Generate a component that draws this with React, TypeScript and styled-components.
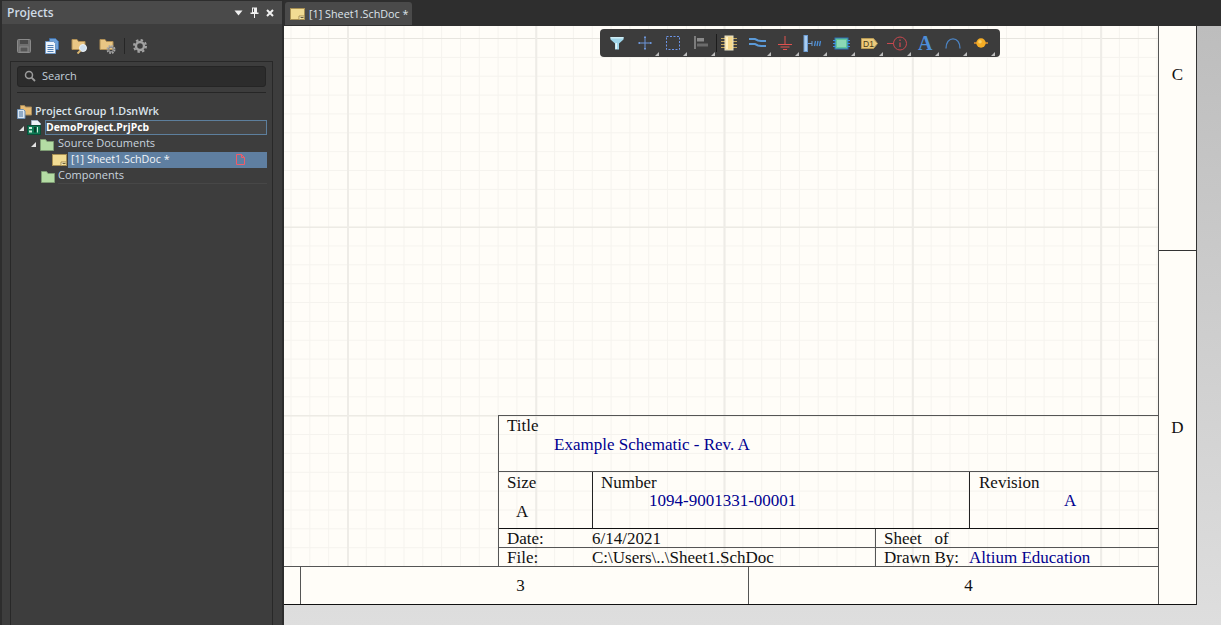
import React from "react";
import styled, { createGlobalStyle } from "styled-components";

const Global = createGlobalStyle`
  html, body { margin: 0; padding: 0; width: 1221px; height: 625px; overflow: hidden; background: #2e2e2e; }
  #root { width: 1221px; height: 625px; }
  * { box-sizing: border-box; }
`;

const UI = `"Open Sans", "Noto Sans", "Liberation Sans", sans-serif`;
const SERIF = `"Liberation Serif", "Times New Roman", serif`;

const Shell = styled.div`
  display: flex;
  width: 1221px;
  height: 625px;
  font-family: ${UI};
`;

/* ---------- left panel ---------- */
const Panel = styled.aside`
  width: 284px;
  flex: none;
  display: flex;
  flex-direction: column;
  background: #2d2d2d;
  padding: 1px 2px 0;
`;
const PanelHeader = styled.header`
  height: 23px;
  flex: none;
  display: flex;
  align-items: center;
  background: #4a4a4a;
  padding-left: 5px;
`;
const PanelTitle = styled.h1`
  flex: 1;
  margin: 0;
  font-size: 12px;
  font-weight: 600;
  color: #cfdbe6;
`;
const HeaderButton = styled.span`
  width: 16px;
  height: 16px;
  display: flex;
  align-items: center;
  justify-content: center;
`;
const HeaderButtons = styled.div`
  display: flex;
  padding-right: 4px;
`;
const PanelBody = styled.div`
  flex: 1;
  display: flex;
  flex-direction: column;
  background: #3d3d3d;
`;
const PanelToolbar = styled.div`
  height: 37px;
  flex: none;
  display: flex;
  align-items: center;
  padding: 7px 0 0 8px;
`;
const ToolSlot = styled.span`
  width: 28px;
  height: 20px;
  display: flex;
  align-items: center;
  justify-content: center;
`;
const ToolDivider = styled.span`
  width: 1px;
  height: 16px;
  margin: 0 1px 0 2px;
  background: #262626;
`;
const PanelInner = styled.div`
  flex: 1;
  margin: 0 9px 0 8px;
  padding: 4px 6px 0;
  border: solid #282828;
  border-width: 1px 1px 0;
`;
const SearchBox = styled.div`
  height: 21px;
  display: flex;
  align-items: center;
  gap: 6px;
  padding: 0 0 2px 6px;
  background: #2c2c2c;
  border: 1px solid #252525;
  border-radius: 3px;
  font-size: 11px;
  color: #c3d0dc;
`;
const Rule = styled.hr`
  margin: 5px 0 11px;
  border: 0;
  height: 1px;
  background: #262626;
`;
const Tree = styled.ul`
  list-style: none;
  margin: 0 -1px 0 -6px;
  padding: 0;
`;
const TreeRow = styled.li<{ $indent: number; $gap: number }>`
  height: 16px;
  display: flex;
  align-items: center;
  gap: ${(p) => p.$gap}px;
  padding-left: ${(p) => p.$indent}px;
`;
const Expander = styled.span`
  width: 0;
  height: 0;
  flex: none;
  border-style: solid;
  border-width: 0 0 5px 5px;
  border-color: transparent transparent #e2e2e2 transparent;
`;
const TreeLabel = styled.span<{ $strong?: boolean }>`
  font-size: ${(p) => (p.$strong ? 10.7 : 11)}px;
  line-height: 14px;
  padding-bottom: 2px;
  white-space: nowrap;
  font-weight: ${(p) => (p.$strong ? 600 : 400)};
  color: ${(p) => (p.$strong ? "#dbe3ea" : "#c8d3dd")};
`;
const ActiveLabel = styled(TreeLabel)`
  flex: 1;
  align-self: flex-start;
  height: 15px;
  padding: 0;
  font-size: 10.4px;
  line-height: 13px;
  border: 1px solid #5d7f9d;
  background: #464646;
  color: #fff;
  font-weight: 700;
`;
const SelectedLabel = styled(TreeLabel)`
  flex: 1;
  height: 16px;
  display: flex;
  align-items: center;
  justify-content: space-between;
  padding: 0 22px 2px 3px;
  font-size: 10.7px;
  background: #5f7fa1;
  color: #f2f5f8;
`;
const UnderlinedLabel = styled(TreeLabel)`
  flex: 1;
  align-self: stretch;
  padding: 0;
  border-bottom: 1px solid #474747;
`;

/* ---------- document area ---------- */
const Workspace = styled.main`
  flex: 1;
  min-width: 0;
  display: flex;
  flex-direction: column;
  position: relative;
`;
const TabBar = styled.nav`
  height: 26px;
  flex: none;
  display: flex;
  align-items: flex-end;
  padding: 0 0 1px 1px;
  background: #2e2e2e;
`;
const Tab = styled.div`
  width: 127px;
  height: 23px;
  display: flex;
  align-items: center;
  gap: 4px;
  padding-left: 5px;
  background: #4a4a4a;
  border-radius: 3px 3px 0 0;
  font-size: 10.8px;
  color: #dfe5ea;
  white-space: nowrap;
`;
const Canvas = styled.div`
  flex: 1;
  display: flex;
  background: linear-gradient(#bdbdbd, #dedede);
  padding-bottom: 20px;
`;
const Sheet = styled.section`
  width: 913px;
  display: grid;
  grid-template-columns: 874px 1fr;
  grid-template-rows: 1fr 37px;
  background: #fffdf8;
  border-right: 1px solid #333;
  border-bottom: 1px solid #111;
  font-family: ${SERIF};
  font-size: 17px;
  color: #111;
`;
const DrawingArea = styled.div`
  display: flex;
  align-items: flex-end;
  justify-content: flex-end;
  border-bottom: 1px solid #555;
  background-image:
    linear-gradient(to right, #eeece7 2px, transparent 2px),
    linear-gradient(to bottom, #e7e5df 1px, transparent 1px),
    linear-gradient(to right, #f5f3ee 1px, transparent 1px),
    linear-gradient(to bottom, #f5f3ee 1px, transparent 1px);
  background-size: 188.3px 100%, 100% 188.7px, 18.83px 100%, 100% 18.87px;
  background-position: 63px 0, 0 12px, 6.5px 0, 0 12px;
`;
const RowZones = styled.div`
  grid-row: 1 / 3;
  grid-column: 2;
  display: flex;
  flex-direction: column;
  border-left: 1px solid #555;
`;
const RowZone = styled.div<{ $h?: number; $top: number }>`
  height: ${(p) => (p.$h ? `${p.$h}px` : "auto")};
  flex: ${(p) => (p.$h ? "none" : 1)};
  padding-top: ${(p) => p.$top}px;
  text-align: center;
  line-height: 18px;
  & + & { border-top: 1px solid #333; }
`;
const ColZones = styled.div`
  display: flex;
`;
const ColZone = styled.div<{ $w: number; $shift?: number }>`
  width: ${(p) => p.$w}px;
  flex: none;
  display: flex;
  align-items: center;
  justify-content: center;
  padding-left: ${(p) => Math.max(p.$shift ?? 0, 0)}px;
  padding-right: ${(p) => Math.max(-(p.$shift ?? 0), 0)}px;
  border-left: 1px solid #555;
  &:first-child { border-left: 0; }
`;

const TitleBlock = styled.div`
  width: 660px;
  height: 151px;
  display: grid;
  grid-template-columns: 94px 377px 1fr;
  grid-template-rows: 56px 57px 19px 18px;
  border: solid #555;
  border-width: 1px 0 0 1px;
  line-height: 18px;
`;
const Cell = styled.div<{ $span?: number; $line?: string; $right?: boolean; $top?: number; $pad?: number }>`
  grid-column: span ${(p) => p.$span ?? 1};
  padding: ${(p) => p.$top ?? 0}px 0 0 ${(p) => p.$pad ?? 8}px;
  border-bottom: 1px solid ${(p) => p.$line ?? "#555"};
  border-right: ${(p) => (p.$right ? "1px solid #222" : "none")};
  white-space: nowrap;
`;
const InfoStrip = styled.div<{ $line?: string }>`
  grid-column: 1 / 4;
  display: grid;
  grid-template-columns: 376px 1fr;
  border-bottom: 1px solid ${(p) => p.$line ?? "#555"};
`;
const InfoCell = styled.div`
  display: flex;
  padding: 1px 0 0 8px;
  white-space: nowrap;
  & + & { border-left: 1px solid #555; }
`;
const FieldName = styled.span<{ $w: number }>`
  width: ${(p) => p.$w}px;
  flex: none;
`;
const Value = styled.div<{ $left: number; $top?: number; $plain?: boolean }>`
  padding-left: ${(p) => p.$left}px;
  margin-top: ${(p) => p.$top ?? 0}px;
  color: ${(p) => (p.$plain ? "#111" : "#000090")};
`;
const InlineValue = styled.span`
  color: #000090;
`;

/* ---------- floating wiring toolbar ---------- */
const FloatBar = styled.div`
  position: absolute;
  left: 316px;
  top: 29px;
  width: 400px;
  height: 28px;
  display: flex;
  padding-left: 3px;
  background: #3c3c3c;
  border-radius: 4px;
`;
const FloatButton = styled.span<{ $more?: boolean }>`
  position: relative;
  width: 28px;
  height: 28px;
  flex: none;
  display: flex;
  align-items: center;
  justify-content: center;
  &::after {
    content: "";
    display: ${(p) => (p.$more ? "block" : "none")};
    position: absolute;
    right: 0;
    bottom: 1px;
    border-style: solid;
    border-width: 0 0 4px 4px;
    border-color: transparent transparent #bdbdbd transparent;
  }
`;
const FloatDivider = styled.span`
  position: absolute;
  left: 116px;
  top: 5px;
  width: 1px;
  height: 18px;
  background: #1c1c1c;
`;

/* ---------- icons ---------- */
const Svg: React.FC<{ w?: number; h?: number; children: React.ReactNode }> = ({ w = 16, h = 16, children }) => (
  <svg width={w} height={h} viewBox={`0 0 ${w} ${h}`} fill="none" style={{ flex: "none", display: "block" }}>
    {children}
  </svg>
);

const SaveIcon = () => (
  <Svg><rect x="1.5" y="1.5" width="13" height="13" rx="1" fill="#6f6f6f" stroke="#8a8a8a" /><rect x="4" y="2" width="8" height="4" fill="#4a4a4a" /><rect x="4" y="9" width="8" height="5" fill="#565656" stroke="#8a8a8a" /></Svg>
);
const CopyIcon = () => (
  <Svg>
    <path d="M5.5 0.5h6l3 3v8h-9z" fill="#6da0d8" stroke="#3f6ea6" />
    <path d="M1.5 3.500h8l2 2v10h-10z" fill="#eef4fb" stroke="#6d97c6" />
    <path d="M3.500 7.500h6M3.500 9.500h6M3.500 11.500h6M3.500 13.500h6" stroke="#4f7fb5" />
  </Svg>
);
const FolderSearchIcon = () => (
  <Svg w={18} h={16}>
    <path d="M1 1.5h5l1.5 2H14v8H1z" fill="#e9c684" stroke="#b08f55" />
    <circle cx="12" cy="10" r="3.5" fill="#cfe0ee" stroke="#eef3f7" />
    <path d="M9.5 12.5L6.5 15.5" stroke="#d9b56f" strokeWidth="2" />
  </Svg>
);
const FolderGearIcon = () => (
  <Svg w={18} h={17}>
    <path d="M1 1.5h5l1.5 2H14v8H1z" fill="#e9c684" stroke="#b08f55" />
    <circle cx="12" cy="11.5" r="3.2" fill="none" stroke="#a9a9a9" strokeWidth="2.6" strokeDasharray="1.6 0.9" />
    <circle cx="12" cy="11.5" r="2.4" fill="none" stroke="#8c8c8c" strokeWidth="1.2" />
  </Svg>
);
const GearIcon = () => (
  <Svg>
    <circle cx="8" cy="8" r="6" stroke="#a2a2a2" strokeWidth="2" strokeDasharray="2.4 2.3" />
    <circle cx="8" cy="8" r="4" stroke="#a0a0a0" strokeWidth="2.4" />
  </Svg>
);
const SearchIcon = () => (
  <Svg w={12} h={12}>
    <circle cx="5" cy="5" r="3.5" stroke="#9c9c9c" strokeWidth="1.5" />
    <path d="M7.6 7.6L11 11" stroke="#9c9c9c" strokeWidth="1.8" />
  </Svg>
);
const DropIcon = () => (
  <Svg w={9} h={6}><path d="M0.5 0.5h8L4.5 5.5z" fill="#f0f0f0" /></Svg>
);
const PinIcon = () => (
  <Svg w={9} h={11}>
    <path d="M2 0.5h5v5h1.5v1.5h-8V5.5H2z" fill="#f0f0f0" />
    <path d="M4.5 7v4" stroke="#f0f0f0" />
    <path d="M3.5 1.5v3.5" stroke="#4a4a4a" />
  </Svg>
);
const CloseIcon = () => (
  <Svg w={8} h={8}><path d="M1 1l6 6M7 1L1 7" stroke="#f0f0f0" strokeWidth="2" /></Svg>
);
const GroupIcon = () => (
  <Svg>
    <path d="M3.5 1.5h4l1 1.500h6v8h-11z" fill="#e6bb74" stroke="#a98b5a" />
    <path d="M0.5 5.500h6l1.500 1.500v7.500h-7.500z" fill="#dbe6f2" stroke="#6f90b4" />
    <path d="M2 8h4M2 10h4M2 12h4" stroke="#47709d" />
  </Svg>
);
const PcbProjectIcon = () => (
  <Svg w={15} h={16}>
    <path d="M4.5 0.5h6l3 3v8h-9z" fill="#eef2f7" stroke="#9fb0c2" />
    <rect x="0.5" y="5.500" width="13" height="9" fill="#0f7a55" stroke="#0b4d37" />
    <rect x="2" y="7" width="3" height="2" fill="#cfeede" />
    <rect x="2" y="10.5" width="3" height="2" fill="#cfeede" />
    <rect x="7" y="7" width="2" height="5.5" fill="#0a3f2c" />
    <path d="M10.5 7v5.500" stroke="#cfeede" />
  </Svg>
);
const GreenFolderIcon = () => (
  <Svg w={14} h={13}>
    <path d="M0.5 1.500h5l1.500 2h6.500v9h-13z" fill="#b4dca4" stroke="#7e9c74" />
  </Svg>
);
const SchDocIcon = () => (
  <Svg w={15} h={12}>
    <rect x="0.5" y="0.5" width="14" height="11" fill="#f2dc93" stroke="#a78f52" />
    <path d="M9 11.500V8h5.500" stroke="#a78f52" fill="#fff6cf" />
    <path d="M10.500 9.500h3" stroke="#6b5f3a" />
  </Svg>
);
const RedDocIcon = () => (
  <Svg w={9} h={11}><path d="M0.5 0.5h5l3 3v7h-8z" stroke="#ef5d68" fill="none" /><path d="M5.500 0.5v3h3" stroke="#ef5d68" /></Svg>
);

const FilterTool = () => (
  <Svg w={14} h={14}>
    <path d="M0.5 1h13v2.500L9 7.500V13.500H5V7.500L0.5 3.500z" fill="#9fd6ea" />
    <path d="M5.500 7v6h1.500V7z" fill="#e6f7fb" />
    <path d="M0.5 1h13v1.500h-13z" fill="#d0eff7" />
  </Svg>
);
const WireCrossTool = () => (
  <Svg w={14} h={14}>
    <path d="M7 0v14M0 7h14" stroke="#6c95d8" />
    <path d="M6 1.500h2M6 12.500h2M1.500 6v2M12.500 6v2" stroke="#6c95d8" />
  </Svg>
);
const SelectTool = () => (
  <Svg w={14} h={14}><rect x="0.5" y="0.5" width="13" height="13" stroke="#6c95e8" strokeDasharray="2 1.500" /></Svg>
);
const AlignTool = () => (
  <Svg w={14} h={14}>
    <rect x="0" y="0" width="2" height="13" fill="#7c7c7c" />
    <rect x="3" y="2" width="7" height="3.5" fill="#8a8a8a" />
    <rect x="3" y="7.5" width="11" height="3" fill="#6b6b6b" />
  </Svg>
);
const PartTool = () => (
  <Svg w={16} h={16}>
    <path d="M0 3.500h16M0 6.500h16M0 9.500h16M0 12.500h16" stroke="#c2a55a" />
    <rect x="4" y="1" width="8" height="14" fill="#f6d98c" stroke="#e8e2c8" />
    <rect x="5" y="2" width="2" height="12" fill="#fff2c6" />
  </Svg>
);
const BusTool = () => (
  <Svg w={17} h={12}>
    <path d="M0 2h6l3 1.500 3 0.500h5" stroke="#5b9ad8" strokeWidth="2" />
    <path d="M0 7h6l3 1.500 3 0.500h5" stroke="#5b9ad8" strokeWidth="2" />
  </Svg>
);
const GroundTool = () => (
  <Svg w={16} h={15}>
    <path d="M8 0v8" stroke="#e0524f" />
    <path d="M1 8.500h14M3.500 11h9M6 13.500h4" stroke="#e0524f" />
  </Svg>
);
const PortTool = () => (
  <Svg w={20} h={17}>
    <rect x="1" y="0.5" width="3.5" height="16" fill="#a8cdf2" stroke="#6d9cd2" />
    <path d="M5 8.500h4" stroke="#6d9cd2" />
    <path d="M9 6v5" stroke="#6d9cd2" />
    <path d="M11.500 11l1-5M14 11l1-5M16.500 11l1-5" stroke="#4c8ed6" strokeWidth="1.3" />
  </Svg>
);
const SheetSymTool = () => (
  <Svg w={17} h={13}>
    <rect x="2" y="1" width="13" height="11" fill="#5fc49a" stroke="#2e6fb8" />
    <rect x="4" y="3" width="9" height="7" fill="#8bd8b6" />
    <path d="M0 3.500h3M0 6.500h3M0 9.500h3M14 3.500h3M14 6.500h3M14 9.500h3" stroke="#3d8fe0" />
  </Svg>
);
const TagText = styled.text`
  font-family: "Liberation Sans", sans-serif;
  font-size: 8.5px;
  fill: #4a3a14;
`;
const NetTool = () => (
  <Svg w={17} h={11}>
    <path d="M0.5 0.5h12l4 5-4 5h-12z" fill="#ecca7c" stroke="#b89b55" />
    <TagText x="2" y="8.5">D1</TagText>
  </Svg>
);
const ProbeTool = () => (
  <Svg w={22} h={15}>
    <circle cx="14" cy="7.500" r="6.500" stroke="#c9484e" />
    <path d="M14 6.500v4.500" stroke="#c9484e" strokeWidth="1.3" />
    <path d="M14 3.500v1.500" stroke="#c9484e" strokeWidth="1.3" />
    <path d="M1 7.500h6.500" stroke="#c9484e" />
  </Svg>
);
const LetterText = styled.text`
  font-family: ${SERIF};
  font-size: 20px;
  font-weight: 700;
  fill: #4d8ed8;
`;
const TextTool = () => (
  <Svg w={20} h={20}>
    <LetterText x="3" y="17">A</LetterText>
  </Svg>
);
const ArcTool = () => (
  <Svg w={16} h={11}>
    <path d="M1 10.500C1 4.500 4 0.900 8 0.900s7 3.600 7 9.600" stroke="#4c84c4" strokeWidth="1.3" />
  </Svg>
);
const JunctionTool = () => (
  <Svg w={14} h={12}>
    <path d="M0 6h14" stroke="#e0902c" strokeWidth="1.5" />
    <circle cx="7" cy="6" r="4.700" fill="#f5ad25" />
    <circle cx="6" cy="4.800" r="1.800" fill="#fbd165" />
  </Svg>
);

const floatTools: { key: string; icon: React.ReactNode; more: boolean }[] = [
  { key: "filter", icon: <FilterTool />, more: false },
  { key: "cross", icon: <WireCrossTool />, more: true },
  { key: "select", icon: <SelectTool />, more: true },
  { key: "align", icon: <AlignTool />, more: true },
  { key: "part", icon: <PartTool />, more: false },
  { key: "bus", icon: <BusTool />, more: true },
  { key: "gnd", icon: <GroundTool />, more: true },
  { key: "port", icon: <PortTool />, more: true },
  { key: "sym", icon: <SheetSymTool />, more: true },
  { key: "net", icon: <NetTool />, more: true },
  { key: "probe", icon: <ProbeTool />, more: true },
  { key: "text", icon: <TextTool />, more: true },
  { key: "arc", icon: <ArcTool />, more: true },
  { key: "junction", icon: <JunctionTool />, more: true },
];

export default function App() {
  return (
    <Shell>
      <Global />
      <Panel>
        <PanelHeader>
          <PanelTitle>Projects</PanelTitle>
          <HeaderButtons>
            <HeaderButton><DropIcon /></HeaderButton>
            <HeaderButton><PinIcon /></HeaderButton>
            <HeaderButton><CloseIcon /></HeaderButton>
          </HeaderButtons>
        </PanelHeader>
        <PanelBody>
          <PanelToolbar>
            <ToolSlot><SaveIcon /></ToolSlot>
            <ToolSlot><CopyIcon /></ToolSlot>
            <ToolSlot><FolderSearchIcon /></ToolSlot>
            <ToolSlot><FolderGearIcon /></ToolSlot>
            <ToolDivider />
            <ToolSlot><GearIcon /></ToolSlot>
          </PanelToolbar>
          <PanelInner>
            <SearchBox><SearchIcon />Search</SearchBox>
            <Rule />
            <Tree>
              <TreeRow $indent={6} $gap={2}>
                <GroupIcon />
                <TreeLabel $strong>Project Group 1.DsnWrk</TreeLabel>
              </TreeRow>
              <TreeRow $indent={8} $gap={3}>
                <Expander />
                <PcbProjectIcon />
                <ActiveLabel>DemoProject.PrjPcb</ActiveLabel>
              </TreeRow>
              <TreeRow $indent={20} $gap={4}>
                <Expander />
                <GreenFolderIcon />
                <TreeLabel>Source Documents</TreeLabel>
              </TreeRow>
              <TreeRow $indent={41} $gap={1}>
                <SchDocIcon />
                <SelectedLabel>[1] Sheet1.SchDoc *<RedDocIcon /></SelectedLabel>
              </TreeRow>
              <TreeRow $indent={30} $gap={3}>
                <GreenFolderIcon />
                <UnderlinedLabel>Components</UnderlinedLabel>
              </TreeRow>
            </Tree>
          </PanelInner>
        </PanelBody>
      </Panel>

      <Workspace>
        <TabBar>
          <Tab><SchDocIcon />[1] Sheet1.SchDoc *</Tab>
        </TabBar>
        <Canvas>
          <Sheet>
            <DrawingArea>
              <TitleBlock>
                <Cell $span={3} $top={1}>
                  Title
                  <Value $left={47} $top={1}>Example Schematic - Rev. A</Value>
                </Cell>
                <Cell $line="#111" $right $top={2}>
                  Size
                  <Value $left={9} $top={11} $plain>A</Value>
                </Cell>
                <Cell $line="#111" $right $top={2}>
                  Number
                  <Value $left={48}>1094-9001331-00001</Value>
                </Cell>
                <Cell $line="#111" $top={2} $pad={9}>
                  Revision
                  <Value $left={85}>A</Value>
                </Cell>
                <InfoStrip>
                  <InfoCell><FieldName $w={85}>Date:</FieldName>6/14/2021</InfoCell>
                  <InfoCell>Sheet&nbsp;&nbsp; of</InfoCell>
                </InfoStrip>
                <InfoStrip $line="transparent">
                  <InfoCell><FieldName $w={85}>File:</FieldName>C:\Users\..\Sheet1.SchDoc</InfoCell>
                  <InfoCell><FieldName $w={85}>Drawn By:</FieldName><InlineValue>Altium Education</InlineValue></InfoCell>
                </InfoStrip>
              </TitleBlock>
            </DrawingArea>
            <RowZones>
              <RowZone $h={224} $top={40}>C</RowZone>
              <RowZone $top={168}>D</RowZone>
            </RowZones>
            <ColZones>
              <ColZone $w={16} />
              <ColZone $w={448} $shift={-8}>3</ColZone>
              <ColZone $w={410} $shift={30}>4</ColZone>
            </ColZones>
          </Sheet>
        </Canvas>
        <FloatBar>
          {floatTools.map((t) => (
            <FloatButton key={t.key} $more={t.more}>{t.icon}</FloatButton>
          ))}
          <FloatDivider />
        </FloatBar>
      </Workspace>
    </Shell>
  );
}
